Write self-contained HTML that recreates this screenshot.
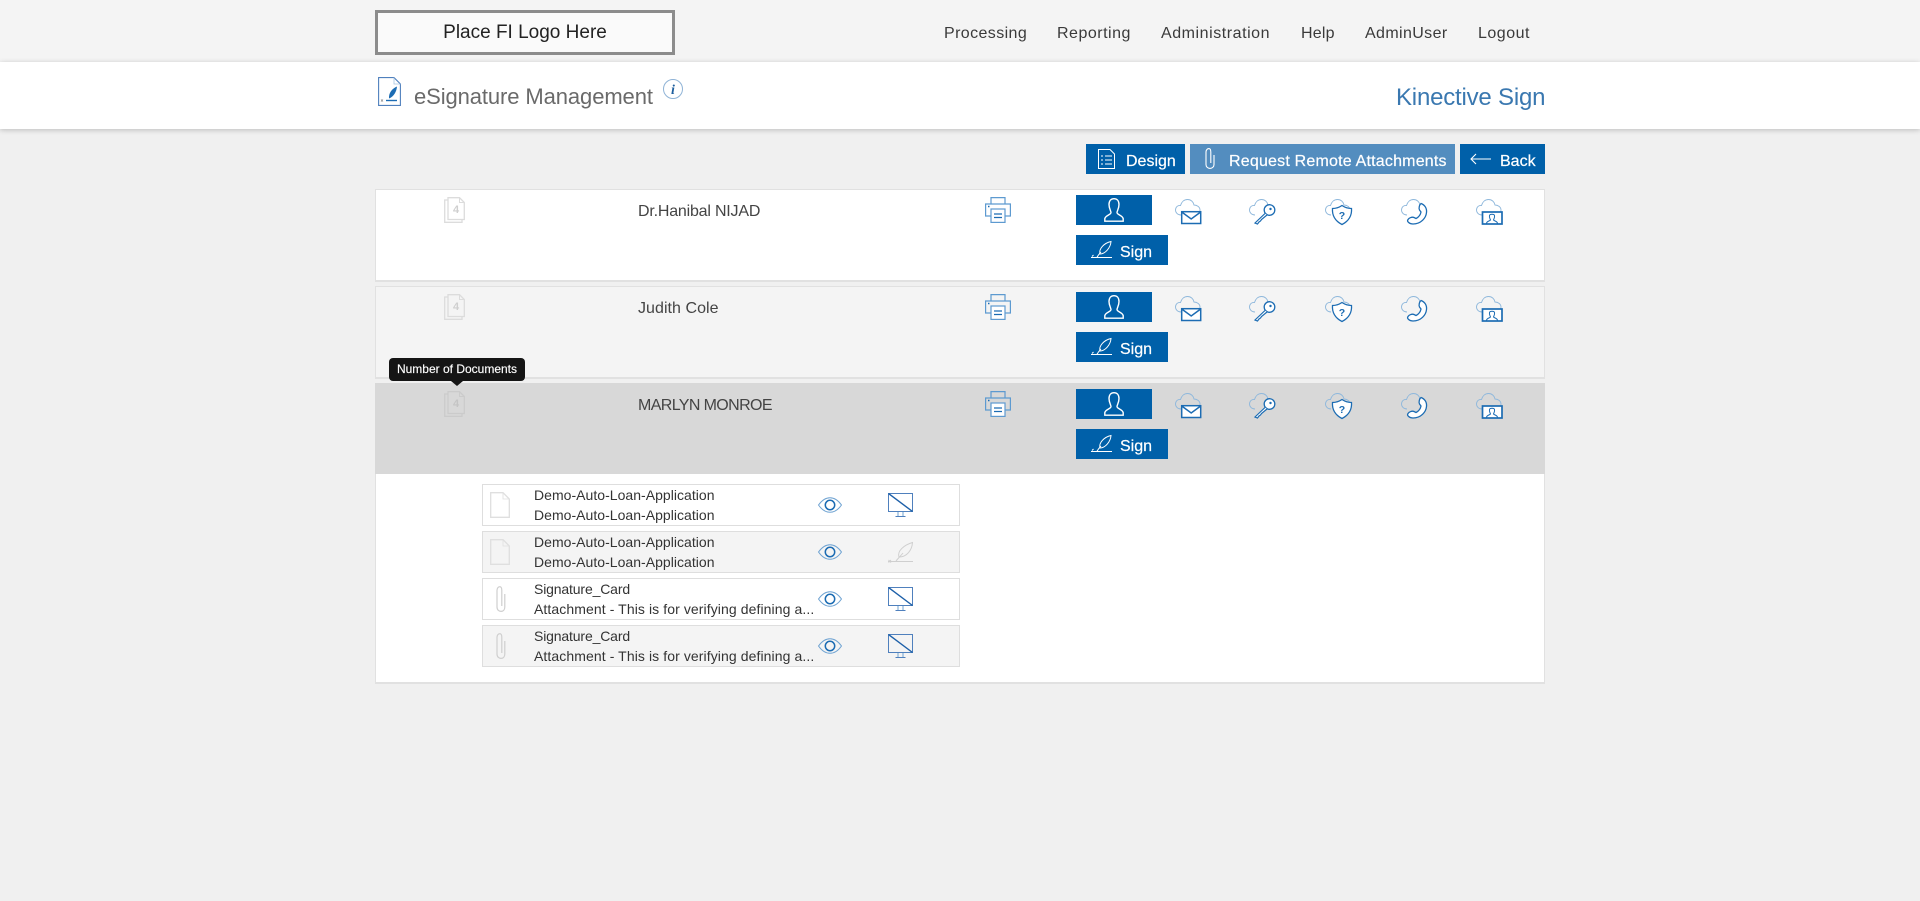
<!DOCTYPE html>
<html lang="en"><head><meta charset="utf-8"><title>eSignature Management</title>
<style>
*{box-sizing:border-box}
html,body{margin:0;padding:0;width:1920px;height:901px;overflow:hidden;background:#f0f0f0;font-family:"Liberation Sans",sans-serif;color:#333}
.a{position:absolute}
.t{position:absolute;white-space:nowrap;line-height:20px}
svg{position:absolute;overflow:visible;fill:none}
.btn{position:absolute;background:#0060a9;color:#fff}
.row{position:absolute;left:375px;width:1170px;height:93px;border:1px solid #e1e1e1;border-bottom:2px solid #e1e1e1}
.row>*{margin-left:-1px;margin-top:-1px}
.sub{position:absolute;left:482px;width:478px;height:42px;border:1px solid #dedede;background:#fff}
.sub.g{background:#f4f4f4}
.sub .t{font-size:14px;color:#333;letter-spacing:.03px}
.nav{top:24px;font-size:16px;color:#3a3a3a}
.w{color:#fff;-webkit-text-stroke:.2px #fff}
</style></head><body>
<svg width="0" height="0" style="position:absolute">
<defs>
<g id="cloud"><path d="M6 16C2.500 16 .5 13.500 .5 11 .5 8 3 6 5.500 6.500 6.500 3 9 .5 12.500 .5 16 .5 18.500 3 19 6 22 6 25 8 25 11 25 12 24.800 13 24 14" stroke="#8fb8dc" stroke-width=".9"/></g>
<g id="mail"><use href="#cloud"/><rect x="6.700" y="12.700" width="19" height="11.800" fill="#fff" stroke="#1c6cb3" stroke-width="1.500"/><path d="M6.700 13L16.200 20 25.700 13" stroke="#1c6cb3" stroke-width="1.500"/></g>
<g id="key"><use href="#cloud"/><circle cx="20.500" cy="11" r="5.300" fill="#fff" stroke="#1c6cb3" stroke-width="1.300"/><circle cx="21.500" cy="10" r="1.200" fill="#1c6cb3"/><path d="M16 14.500L6 24 8.500 25 10 23 11.500 22 12.500 20.500 18 16" fill="#fff" stroke="#1c6cb3" stroke-width="1.200"/></g>
<g id="shield"><use href="#cloud"/><path d="M17 6.500C20 8.500 23.500 9.500 26.500 9.500 27 16 24 22 17 25.500 10 22 7 16 7.500 9.500 10.500 9.500 14 8.500 17 6.500Z" fill="#fff" stroke="#1c6cb3" stroke-width="1.300"/><text x="17" y="20" text-anchor="middle" font-family="Liberation Sans" font-weight="700" font-size="10.500" fill="#1c6cb3">?</text></g>
<g id="phone"><use href="#cloud"/><path d="M20 4.500C24 6 26 9.500 25.500 13.500 25 19 20 25 12 25 8.500 25 5.500 22.500 7 20.500 8 19 11 17.500 13 18.500L15 19.500C18 18 19.500 15.500 20 13L18.500 11C17.500 9 18.500 5.500 20 4.500Z" fill="#fff" stroke="#1c6cb3" stroke-width="1.300"/></g>
<g id="video"><use href="#cloud"/><rect x="6.500" y="13" width="19.500" height="12" fill="#fff" stroke="#1c6cb3" stroke-width="1.700"/><path d="M10.500 24.500C10.500 22 14 22 14.500 21 14 19.500 13 18.500 13.500 16.500 14 14.800 18 14.800 18.500 16.500 19 18.500 18 19.500 17.500 21 18 22 21.500 22 21.500 24.500" stroke="#1c6cb3" stroke-width="1"/></g>
<g id="print" stroke="#5d9ad0" stroke-width="1.200"><path d="M6 7V.6H20V7"/><path d="M6 19H.6V7H25.400V19H20"/><rect x="6" y="12" width="14" height="13.400" fill="#fff" stroke="#5d9ad0"/><path d="M9 17H17M9 20.500H17" stroke="#1c6cb3" stroke-width="1.300"/><path d="M3 9.500H4.500" stroke="#1c6cb3" stroke-width="1.500"/></g>
<g id="docs" stroke-width="1.300"><path d="M4 3H.7V25.300H18V22.500"/><path d="M4 .7H15.500L20.300 5.500V22.500H4Z"/><path d="M15.500 .7V5.500H20.300" stroke-width="1"/></g>
<g id="person" stroke="#fff" stroke-width="1.400"><path d="M.8 23.200V21C.8 17.500 7 17 7 14.500 7 13 5 10.500 5 6.500 5 2.500 7.300 .7 10 .7 12.700 .7 15 2.500 15 6.500 15 10.500 13 13 13 14.500 13 17 19.200 17.500 19.200 21V23.200Z"/></g>
<g id="feather" stroke="#fff" stroke-width="1"><path d="M0 16.500H21"/><path d="M1 15.500L2.500 14"/><path d="M6 16.300C7 14.500 8.500 12.500 10 11"/><path d="M9 13C7.500 8 13 2 20 .5 19.500 7 14 13 9 13Z"/></g>
<g id="eye" stroke="#6fa3d2" stroke-width="1"><path d="M.5 8C4 3 8 .7 12 .7 16 .7 20 3 23.500 8 20 13 16 15.300 12 15.300 8 15.300 4 13 .5 8Z"/><circle cx="12" cy="8" r="4.700" stroke="#1c6cb3" stroke-width="1.500"/></g>
<g id="mon"><rect x=".5" y=".5" width="24" height="18" stroke="#4f80bd" stroke-width="1"/><path d="M.5 .5L24.500 18.500" stroke="#1c5fa8" stroke-width="1.400"/><path d="M10 19V23M15 19V23" stroke="#6fa3d2" stroke-width="1"/><path d="M7.500 23.500H17.500" stroke="#4f80bd" stroke-width="1"/></g>
<g id="page" stroke="#dfdfdf" stroke-width="1.300"><path d="M.7 .7H13L19.300 7V25.300H.7Z"/><path d="M13 .7V7H19.300" stroke-width=".8"/></g>
<g id="clip" stroke="#cfcfcf" stroke-width="1.200"><path d="M8.800 8V21C8.800 24 7 25.400 5 25.400 3 25.400 1 24 1 21V4.500C1 2 2.500 .7 3.800 .7 5 .7 5.800 2 5.800 4.500V20"/></g>
</defs></svg>

<!-- top bar -->
<div class="a" style="left:0;top:0;width:1920px;height:62px;background:#f4f4f4"></div>
<div class="a" style="left:375px;top:10px;width:300px;height:45px;border:3px solid #8c8c8c;background:#fafafa;text-align:center;font-size:19px;line-height:39px;color:#222">Place FI Logo Here</div>
<div class="t nav" style="left:944px;letter-spacing:.4px">Processing</div>
<div class="t nav" style="left:1057px;letter-spacing:.5px">Reporting</div>
<div class="t nav" style="left:1161px;letter-spacing:.55px">Administration</div>
<div class="t nav" style="left:1301px;letter-spacing:.2px">Help</div>
<div class="t nav" style="left:1365px;letter-spacing:.38px">AdminUser</div>
<div class="t nav" style="left:1478px;letter-spacing:.5px">Logout</div>

<!-- white band -->
<div class="a" style="left:0;top:62px;width:1920px;height:67px;background:#fff;box-shadow:0 1px 5px rgba(0,0,0,.22)"></div>
<svg style="left:378px;top:77px" width="23" height="29" viewBox="0 0 23 29"><path d="M.6 .6H16L22.400 7V28.400H.6Z" stroke="#4f80bd" stroke-width="1.100" fill="#fff"/><path d="M16 .6V7H22.400" stroke="#a9c5e2" stroke-width=".8"/><path d="M11 21.500C10.500 16 14 11.500 19 9.500 18.500 14.500 16 19.500 11 21.500Z" fill="#1c6cb3"/><path d="M8 23.500H19" stroke="#1c6cb3" stroke-width="1.400"/><path d="M3 22.500L5 24.500M5 22.500L3 24.500" stroke="#888" stroke-width=".7"/></svg>
<div class="t" style="left:414px;top:86px;font-size:22px;line-height:22px;color:#6a6a6a;letter-spacing:-.1px">eSignature Management</div>
<svg style="left:663px;top:79px" width="20" height="20" viewBox="0 0 20 20"><circle cx="10" cy="10" r="9.500" stroke="#8fb3d6" stroke-width="1"/><text x="10" y="15" text-anchor="middle" font-family="Liberation Serif" font-style="italic" font-weight="700" font-size="14" fill="#1f5f9e">i</text></svg>
<div class="t" style="left:1396px;top:86px;font-size:24px;line-height:24px;color:#3a78b0;letter-spacing:-.2px">Kinective Sign</div>

<!-- action buttons -->
<div class="btn" style="left:1086px;top:144px;width:99px;height:30px"></div>
<svg style="left:1098px;top:149px" width="17" height="20" viewBox="0 0 17 20" stroke="#fff" stroke-width="1"><path d="M.5 .5H12L16.500 5V19.500H.5Z"/><path d="M3 7H5M7 7H14M3 11H5M7 11H14M3 15H5M7 15H14"/></svg>
<div class="t w" style="left:1126px;top:152px;font-size:16px">Design</div>
<div class="btn" style="left:1190px;top:144px;width:265px;height:30px;background:#538dbf"></div>
<svg style="left:1205px;top:148px" width="10" height="21" viewBox="0 0 10 21" stroke="#fff" stroke-width="1.100"><path d="M9 7V16.500C9 19 7 20.400 5 20.400 3 20.400 1 19 1 16.500V4C1 2 2.500 .6 3.800 .6 5 .6 5.800 2 5.800 4V15"/></svg>
<div class="t w" style="left:1229px;top:152px;font-size:16px;letter-spacing:.2px">Request Remote Attachments</div>
<div class="btn" style="left:1460px;top:144px;width:85px;height:30px"></div>
<svg style="left:1470px;top:153px" width="21" height="12" viewBox="0 0 21 12" stroke="#fff" stroke-width="1.100"><path d="M21 6H1M6 1L1 6 6 11"/></svg>
<div class="t w" style="left:1500px;top:152px;font-size:16px">Back</div>

<!-- row 1 -->
<div class="row" style="top:189px;background:#fff">
 <svg style="left:69px;top:8px" width="21" height="26" stroke="#dcdcdc"><use href="#docs"/></svg>
 <div class="t" style="left:263px;top:13px;font-size:16px;color:#444;letter-spacing:-.2px">Dr.Hanibal NIJAD</div>
 <svg style="left:610px;top:8px" width="26" height="26"><use href="#print"/></svg>
 <div class="btn" style="left:701px;top:6px;width:76px;height:30px"></div>
 <svg style="left:729px;top:9px" width="20" height="24"><use href="#person"/></svg>
 <div class="btn" style="left:701px;top:46px;width:92px;height:30px"></div>
 <svg style="left:716px;top:52px" width="21" height="17"><use href="#feather"/></svg>
 <div class="t w" style="left:745px;top:54px;font-size:16px">Sign</div>
 <svg style="left:800px;top:10px" width="26" height="25"><use href="#mail"/></svg>
 <svg style="left:874px;top:10px" width="26" height="25"><use href="#key"/></svg>
 <svg style="left:950px;top:10px" width="26" height="25"><use href="#shield"/></svg>
 <svg style="left:1026px;top:10px" width="26" height="25"><use href="#phone"/></svg>
 <svg style="left:1101px;top:10px" width="26" height="25"><use href="#video"/></svg>
</div>

<!-- row 2 -->
<div class="row" style="top:286px;background:#f4f4f4">
 <svg style="left:69px;top:8px" width="21" height="26" stroke="#dcdcdc"><use href="#docs"/></svg>
 <div class="t" style="left:263px;top:13px;font-size:16px;color:#444;letter-spacing:.05px">Judith Cole</div>
 <svg style="left:610px;top:8px" width="26" height="26"><use href="#print"/></svg>
 <div class="btn" style="left:701px;top:6px;width:76px;height:30px"></div>
 <svg style="left:729px;top:9px" width="20" height="24"><use href="#person"/></svg>
 <div class="btn" style="left:701px;top:46px;width:92px;height:30px"></div>
 <svg style="left:716px;top:52px" width="21" height="17"><use href="#feather"/></svg>
 <div class="t w" style="left:745px;top:54px;font-size:16px">Sign</div>
 <svg style="left:800px;top:10px" width="26" height="25"><use href="#mail"/></svg>
 <svg style="left:874px;top:10px" width="26" height="25"><use href="#key"/></svg>
 <svg style="left:950px;top:10px" width="26" height="25"><use href="#shield"/></svg>
 <svg style="left:1026px;top:10px" width="26" height="25"><use href="#phone"/></svg>
 <svg style="left:1101px;top:10px" width="26" height="25"><use href="#video"/></svg>
</div>

<!-- detail panel -->
<div class="a" style="left:375px;top:383px;width:1170px;height:301px;background:#fff;border:1px solid #e1e1e1;border-bottom:2px solid #e1e1e1"></div>

<!-- row 3 -->
<div class="row" style="top:383px;height:91px;background:#d8d8d8;border-color:#d8d8d8">
 <svg style="left:69px;top:8px" width="21" height="26" stroke="#cbcbcb"><use href="#docs"/></svg>
 <div class="t" style="left:263px;top:13px;font-size:16px;color:#444;letter-spacing:-.62px">MARLYN MONROE</div>
 <svg style="left:610px;top:8px" width="26" height="26"><use href="#print"/></svg>
 <div class="btn" style="left:701px;top:6px;width:76px;height:30px"></div>
 <svg style="left:729px;top:9px" width="20" height="24"><use href="#person"/></svg>
 <div class="btn" style="left:701px;top:46px;width:92px;height:30px"></div>
 <svg style="left:716px;top:52px" width="21" height="17"><use href="#feather"/></svg>
 <div class="t w" style="left:745px;top:54px;font-size:16px">Sign</div>
 <svg style="left:800px;top:10px" width="26" height="25"><use href="#mail"/></svg>
 <svg style="left:874px;top:10px" width="26" height="25"><use href="#key"/></svg>
 <svg style="left:950px;top:10px" width="26" height="25"><use href="#shield"/></svg>
 <svg style="left:1026px;top:10px" width="26" height="25"><use href="#phone"/></svg>
 <svg style="left:1101px;top:10px" width="26" height="25"><use href="#video"/></svg>
</div>

<!-- document count digits -->
<div class="t" style="left:453px;top:200px;font-size:11px;font-weight:700;color:#cfcfcf">4</div>
<div class="t" style="left:453px;top:297px;font-size:11px;font-weight:700;color:#cfcfcf">4</div>
<div class="t" style="left:453px;top:394px;font-size:11px;font-weight:700;color:#c4c4c4">4</div>

<!-- tooltip -->
<div class="a" style="left:389px;top:358px;width:136px;height:23px;background:#151515;border-radius:4px;color:#fff;font-size:12px;line-height:22px;text-align:center;-webkit-text-stroke:.15px #fff">Number of Documents</div>
<div class="a" style="left:451px;top:381px;width:0;height:0;border-left:6px solid transparent;border-right:6px solid transparent;border-top:5px solid #151515"></div>

<!-- sub rows -->
<div class="sub" style="top:484px">
 <svg style="left:7px;top:7px" width="20" height="26"><use href="#page"/></svg>
 <div class="t" style="left:51px;top:0px">Demo-Auto-Loan-Application</div>
 <div class="t" style="left:51px;top:20px">Demo-Auto-Loan-Application</div>
 <svg style="left:335px;top:12px" width="24" height="16"><use href="#eye"/></svg>
 <svg style="left:405px;top:8px" width="25" height="24"><use href="#mon"/></svg>
</div>
<div class="sub g" style="top:531px">
 <svg style="left:7px;top:7px" width="20" height="26"><use href="#page"/></svg>
 <div class="t" style="left:51px;top:0px">Demo-Auto-Loan-Application</div>
 <div class="t" style="left:51px;top:20px">Demo-Auto-Loan-Application</div>
 <svg style="left:335px;top:12px" width="24" height="16"><use href="#eye"/></svg>
 <svg style="left:405px;top:10px" width="25" height="20" viewBox="0 0 25 20" stroke="#cfcfcf" stroke-width="1"><path d="M0 19.500H25"/><path d="M.5 18L3 20.500M3 18L.5 20.500"/><path d="M8 19C10 16.500 13 13.500 15 11"/><path d="M11 15C9 9 16 3 24.500 .5 24 8 19 15 11 15Z"/></svg>
</div>
<div class="sub" style="top:578px">
 <svg style="left:13px;top:7px" width="10" height="26"><use href="#clip"/></svg>
 <div class="t" style="left:51px;top:0px;letter-spacing:-.15px">Signature_Card</div>
 <div class="t" style="left:51px;top:20px;letter-spacing:.09px">Attachment - This is for verifying defining a...</div>
 <svg style="left:335px;top:12px" width="24" height="16"><use href="#eye"/></svg>
 <svg style="left:405px;top:8px" width="25" height="24"><use href="#mon"/></svg>
</div>
<div class="sub g" style="top:625px">
 <svg style="left:13px;top:7px" width="10" height="26"><use href="#clip"/></svg>
 <div class="t" style="left:51px;top:0px;letter-spacing:-.15px">Signature_Card</div>
 <div class="t" style="left:51px;top:20px;letter-spacing:.09px">Attachment - This is for verifying defining a...</div>
 <svg style="left:335px;top:12px" width="24" height="16"><use href="#eye"/></svg>
 <svg style="left:405px;top:8px" width="25" height="24"><use href="#mon"/></svg>
</div>
</body></html>
